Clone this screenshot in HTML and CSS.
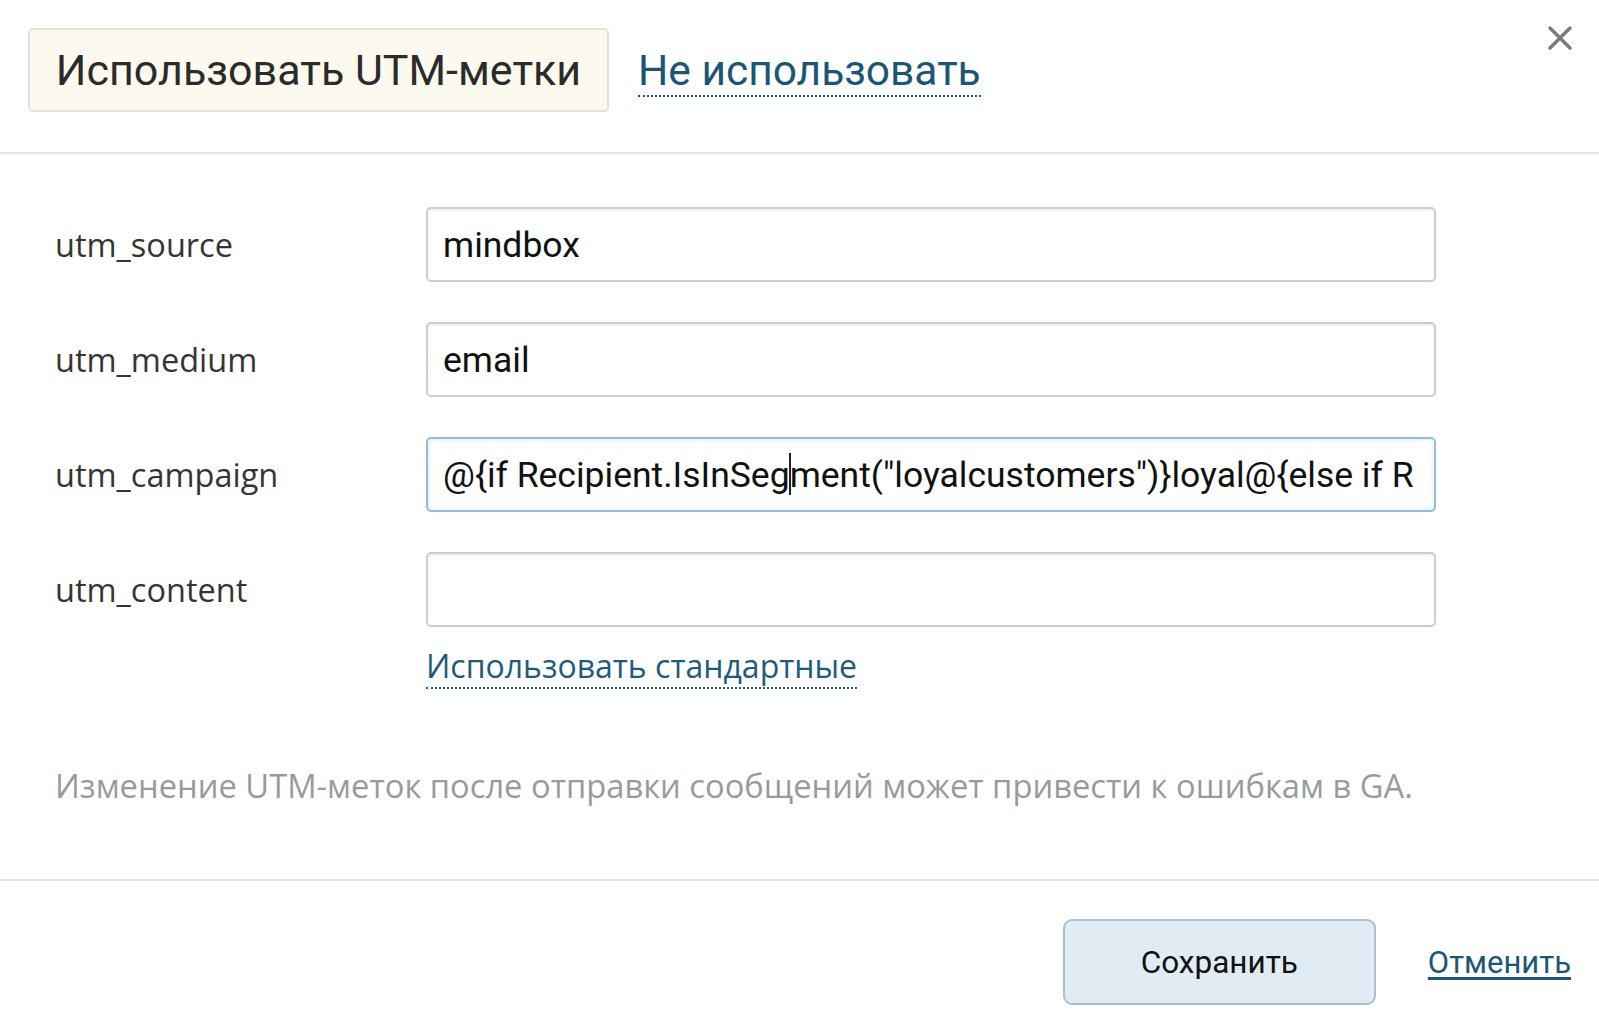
FILE: index.html
```html
<!DOCTYPE html>
<html lang="ru">
<head>
<meta charset="utf-8">
<title>UTM-метки</title>
<link rel="stylesheet" href="styles.css">
</head>
<body>
<div class="dialog">
  <header class="head">
    <div class="tabs">
      <button class="tab tab-active">Использовать UTM-метки</button>
      <a class="tab-link" href="#">Не использовать</a>
    </div>
    <button class="close" aria-label="Закрыть">
      <svg width="24" height="24" viewBox="0 0 24 24"><path d="M2 2 L22 22 M22 2 L2 22" stroke="#7a7a7a" stroke-width="3.4" stroke-linecap="round"/></svg>
    </button>
  </header>
  <main class="body">
    <div class="rows">
      <div class="row">
        <label class="label">utm_source</label>
        <div class="field"><span class="value">mindbox</span></div>
      </div>
      <div class="row">
        <label class="label">utm_medium</label>
        <div class="field"><span class="value">email</span></div>
      </div>
      <div class="row">
        <label class="label">utm_campaign</label>
        <div class="field field-focus"><span class="value">@{if Recipient.IsInSeg<span class="caret"></span>ment("loyalcustomers")}loyal@{else if R</span></div>
      </div>
      <div class="row">
        <label class="label">utm_content</label>
        <div class="field"><span class="value"></span></div>
      </div>
    </div>
    <div class="defaults">
      <a class="dotted-link" href="#">Использовать стандартные</a>
    </div>
    <p class="hint">Изменение UTM-меток после отправки сообщений может привести к ошибкам в GA.</p>
  </main>
  <footer class="foot">
    <button class="save">Сохранить</button>
    <a class="cancel" href="#">Отменить</a>
  </footer>
</div>
</body>
</html>
```
FILE: styles.css
```css
html, body {
  margin: 0;
  padding: 0;
  background: #ffffff;
}

.dialog {
  width: 1599px;
  height: 1033px;
  display: flex;
  flex-direction: column;
  font-family: "Open Sans", "Noto Sans", sans-serif;
  color: #333;
}

.head {
  height: 152px;
  border-bottom: 2px solid #e3e3e3;
  display: flex;
  justify-content: space-between;
  align-items: flex-start;
  box-sizing: content-box;
}

.tabs {
  display: flex;
  align-items: center;
  margin-top: 28px;
  margin-left: 28px;
  gap: 29px;
}

.tab {
  font-family: "Roboto", "Noto Sans", sans-serif;
  font-size: 43px;
  color: #2b2b2b;
  background: #fcf9ee;
  border: 2px solid #e4e1d6;
  border-radius: 5px;
  width: 581px;
  height: 84px;
  padding: 0;
  margin: 0;
  cursor: pointer;
}

.tab-link {
  font-family: "Roboto", "Noto Sans", sans-serif;
  font-size: 42.5px;
  color: #1c5675;
  text-decoration: none;
  border-bottom: 2px dotted #1c5675;
  line-height: 48px;
  margin-top: 3px;
}

.close {
  background: none;
  border: 0;
  padding: 0;
  margin: 26px 27px 0 0;
  width: 24px;
  height: 24px;
  cursor: pointer;
}

.close svg {
  display: block;
}

.body {
  flex: 1;
  padding: 53px 0 0 55px;
  border-bottom: 2px solid #e8e8e8;
  box-sizing: border-box;
}

.rows {
  display: flex;
  flex-direction: column;
  gap: 40px;
}

.row {
  display: flex;
  align-items: center;
}

.label {
  width: 371px;
  font-size: 32.5px;
  color: #353535;
}

.field {
  width: 1010px;
  height: 75px;
  box-sizing: border-box;
  border: 2px solid #cdcdcd;
  border-radius: 5px;
  box-shadow: inset 0 2px 2px rgba(0, 0, 0, 0.06);
  padding: 0 15px;
  display: flex;
  align-items: center;
  overflow: hidden;
  white-space: nowrap;
  font-family: "Roboto", "Noto Sans", sans-serif;
  font-size: 35.5px;
  color: #111;
}

.field-focus {
  border-color: #8fbfd9;
  box-shadow: inset 0 0 4px rgba(120, 180, 215, 0.35);
}

.caret {
  display: inline-block;
  width: 0;
  height: 42px;
  border-left: 2px solid #222;
  vertical-align: -8px;
  margin: 0 -1px;
}

.defaults {
  margin: 17px 0 0 371px;
}

.dotted-link {
  font-size: 32px;
  color: #1f5b7a;
  text-decoration: none;
  border-bottom: 2px dotted #1f5b7a;
}

.hint {
  margin: 76px 0 0;
  font-size: 32.7px;
  color: #9a9a9a;
}

.foot {
  height: 152px;
  display: flex;
  align-items: flex-start;
  justify-content: flex-end;
  padding-top: 38px;
  padding-right: 28px;
  box-sizing: border-box;
  gap: 52px;
}

.save {
  width: 313px;
  height: 86px;
  background: #e1ebf3;
  border: 2px solid #a9c0d0;
  border-radius: 9px;
  font-family: "Roboto", "Noto Sans", sans-serif;
  font-size: 31.5px;
  color: #111;
  cursor: pointer;
  padding: 0;
}

.cancel {
  font-family: "Roboto", "Noto Sans", sans-serif;
  font-size: 31px;
  color: #1c5675;
  text-decoration: underline;
  text-underline-offset: 4px;
  margin-top: 25px;
}
```
